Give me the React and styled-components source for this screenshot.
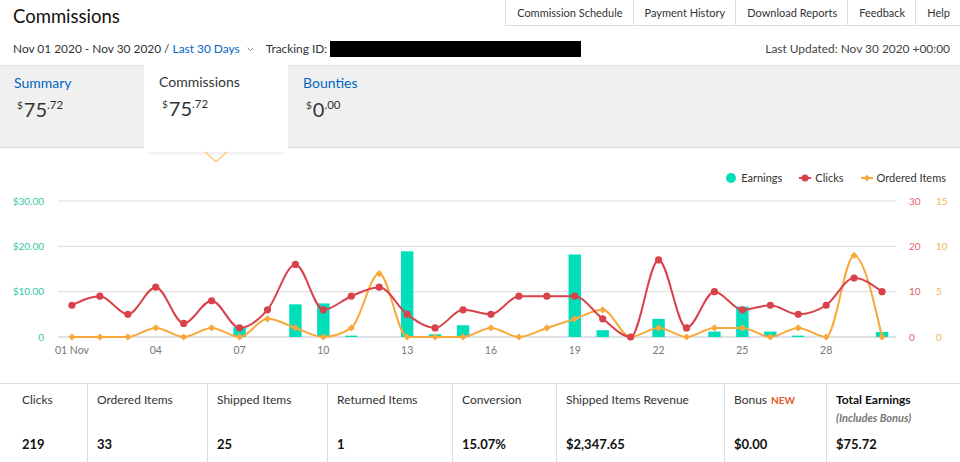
import React from "react";
import styled, { createGlobalStyle } from "styled-components";

const GlobalStyle = createGlobalStyle`
  html, body { margin: 0; padding: 0; background: #fff; }
  body { font-family: Lato, "Liberation Sans", sans-serif; color: #333; }
  #root { width: 960px; height: 462px; overflow: hidden; }
`;

const Page = styled.div`
  width: 960px;
  height: 462px;
  display: flex;
  flex-direction: column;
`;

const TopRow = styled.div`
  display: flex;
  justify-content: space-between;
  align-items: flex-start;
  height: 40px;
  padding-left: 13px;
`;

const Title = styled.h1`
  margin: 0;
  padding-top: 5px;
  font-size: 18.5px;
  line-height: 22px;
  font-weight: 400;
  color: #111;
`;

const Nav = styled.nav`
  display: flex;
  border-bottom: 1px solid #ddd;
`;

const NavItem = styled.div`
  padding: 0 10px 0 11px;
  line-height: 25px;
  font-size: 11px;
  color: #333;
  border-left: 1px solid #ddd;
  white-space: nowrap;
`;

const SubRow = styled.div`
  display: flex;
  justify-content: space-between;
  align-items: flex-start;
  height: 25px;
  padding: 0 10px 0 13px;
  font-size: 11.9px;
  line-height: 17px;
`;

const FilterGroup = styled.div`
  display: flex;
  align-items: center;
  white-space: nowrap;
`;

const Link = styled.span`
  color: #0066c0;
`;

const Chevron = styled.svg`
  margin: 2px 12px 0 7px;
`;

const Redacted = styled.div`
  width: 251px;
  height: 16px;
  margin-left: 3px;
  background: #000;
`;

const Muted = styled.span`
  color: #444;
`;

const TabBar = styled.div`
  display: flex;
  height: 81px;
  background: #f0f0f0;
  border-top: 1px solid #e4e4e4;
  border-bottom: 1px solid #dadada;
`;

const Tab = styled.div`
  position: relative;
  width: 144px;
  padding: 8px 0 0 ${(p) => (p.$first ? 14 : 15)}px;
  box-sizing: border-box;
  background: ${(p) => (p.$active ? "#fff" : "transparent")};
  margin-top: ${(p) => (p.$active ? "-1px" : "0")};
  height: ${(p) => (p.$active ? "87px" : "81px")};
  box-shadow: ${(p) => (p.$active ? "0 5px 4px -4px rgba(0,0,0,0.10)" : "none")};
  z-index: ${(p) => (p.$active ? 2 : 1)};
`;

const TabLabel = styled.div`
  font-size: 14px;
  line-height: 17px;
  color: ${(p) => (p.$active ? "#333" : "#0066c0")};
`;

const Price = styled.div`
  margin-top: 6px;
  padding-left: 3px;
  display: flex;
  align-items: flex-start;
  color: #333;
  line-height: 24px;
`;

const Cur = styled.span`
  font-size: 10px;
  line-height: 14px;
  margin-top: 1px;
  margin-right: 1px;
`;

const Whole = styled.span`
  font-size: 20px;
`;

const Cents = styled.span`
  font-size: 11.5px;
  line-height: 14px;
  margin-top: 1px;
`;

const Pointer = styled.svg`
  position: absolute;
  left: 60px;
  top: 86px;
`;

const ChartSection = styled.section`
  display: flex;
  flex-direction: column;
  height: 235px;
`;

const Legend = styled.div`
  display: flex;
  justify-content: flex-end;
  align-items: flex-start;
  gap: 17px;
  height: 45px;
  padding: 23px 14px 0 0;
  box-sizing: border-box;
  font-size: 11px;
  line-height: 14px;
  color: #333;
`;

const LegendItem = styled.div`
  display: flex;
  align-items: center;
  gap: ${(p) => p.$gap || 4}px;
  height: 14px;
`;

const StatsRow = styled.div`
  display: grid;
  grid-template-columns: 87px 120px 120px 125px 104px 168px 102px 134px;
  border-top: 1px solid #ddd;
  height: 80px;
`;

const StatCell = styled.div`
  display: flex;
  flex-direction: column;
  padding: 9px 0 11px ${(p) => (p.$first ? 22 : 9)}px;
  border-left: ${(p) => (p.$first ? "none" : "1px solid #ddd")};
`;

const StatLabel = styled.div`
  font-size: 12px;
  line-height: 14px;
  color: ${(p) => (p.$strong ? "#111" : "#333")};
  font-weight: ${(p) => (p.$strong ? 700 : 400)};
  white-space: nowrap;
`;

const NewBadge = styled.span`
  color: #e3571f;
  font-weight: 700;
  font-size: 10px;
  margin-left: 4px;
`;

const StatNote = styled.div`
  margin-top: 4px;
  font-size: 11px;
  font-style: italic;
  font-weight: 700;
  color: #777;
`;

const StatValue = styled.div`
  margin-top: auto;
  font-size: 13px;
  line-height: 14px;
  font-weight: 700;
  color: #111;
`;

const clicks = [7, 9, 5, 11, 3, 8, 2, 6, 16, 6, 9, 11, 5, 2, 6, 5, 9, 9, 9, 4, 0, 17, 2, 10, 6, 7, 5, 7, 13, 10];
const items = [0, 0, 0, 1, 0, 1, 0, 2, 1, 0, 1, 7, 0, 0, 0, 1, 0, 1, 2, 3, 0, 1, 0, 1, 1, 0, 1, 0, 9, 0];
const earnings = [0, 0, 0, 0, 0, 0, 2.2, 0, 7.2, 7.4, 0.3, 0, 18.9, 0.6, 2.6, 0, 0, 0, 18.2, 1.5, 0, 4.0, 0, 1.2, 6.7, 1.2, 0.3, 0, 0, 1.1];

const X0 = 58;
const X1 = 896;
const BAND = (X1 - X0) / 30;
const YB = 144;
const YT = 8;
const H = YB - YT;
const xAt = (i) => X0 + (i + 0.5) * BAND;
const yEarn = (v) => YB - (v / 30) * H;
const yClick = (v) => YB - (v / 30) * H;
const yItem = (v) => YB - (v / 15) * H;

function monotonePath(pts) {
  const n = pts.length;
  const xs = pts.map((p) => p[0]);
  const ys = pts.map((p) => p[1]);
  const t = new Array(n).fill(0);
  for (let i = 1; i < n - 1; i++) {
    const h0 = xs[i] - xs[i - 1];
    const h1 = xs[i + 1] - xs[i];
    const s0 = (ys[i] - ys[i - 1]) / h0;
    const s1 = (ys[i + 1] - ys[i]) / h1;
    const p = (s0 * h1 + s1 * h0) / (h0 + h1);
    t[i] = (Math.sign(s0) + Math.sign(s1)) * Math.min(Math.abs(s0), Math.abs(s1), 0.5 * Math.abs(p)) || 0;
  }
  t[0] = (3 * (ys[1] - ys[0]) / (xs[1] - xs[0]) - t[1]) / 2;
  t[n - 1] = (3 * (ys[n - 1] - ys[n - 2]) / (xs[n - 1] - xs[n - 2]) - t[n - 2]) / 2;
  let d = `M${xs[0]},${ys[0]}`;
  for (let i = 0; i < n - 1; i++) {
    const dx = (xs[i + 1] - xs[i]) / 3;
    d += ` C${xs[i] + dx},${ys[i] + dx * t[i]} ${xs[i + 1] - dx},${ys[i + 1] - dx * t[i + 1]} ${xs[i + 1]},${ys[i + 1]}`;
  }
  return d;
}

const TEAL = "#00dfb9";
const RED = "#d9414b";
const ORANGE = "#f9a83c";

function Chart() {
  const clickPts = clicks.map((v, i) => [xAt(i), yClick(v)]);
  const itemPts = items.map((v, i) => [xAt(i), yItem(v)]);
  const grid = [0, 10, 20, 30];
  const xTicks = [0, 3, 6, 9, 12, 15, 18, 21, 24, 27];
  return (
    <svg width="960" height="190" viewBox="0 0 960 190" style={{ display: "block" }}>
      {grid.map((g) => (
        <line
          key={g}
          x1={X0}
          x2={X1}
          y1={yEarn(g)}
          y2={yEarn(g)}
          stroke={g === 0 ? "#bcc6cf" : "#dcdcdc"}
          strokeWidth="1"
        />
      ))}
      <g fontFamily="Lato, 'Liberation Sans', sans-serif" fontSize="10">
        {grid.map((g) => (
          <text key={"l" + g} x="44" y={yEarn(g) + 3.5} textAnchor="end" fill="#33c9a6">
            {g === 0 ? "0" : `$${g}.00`}
          </text>
        ))}
        {grid.map((g) => (
          <text key={"r" + g} x="909" y={yEarn(g) + 3.5} fill="#e0636b">
            {g}
          </text>
        ))}
        {grid.map((g) => (
          <text key={"o" + g} x="936" y={yEarn(g) + 3.5} fill="#f5b458">
            {g / 2}
          </text>
        ))}
        {xTicks.map((i) => (
          <text key={"x" + i} x={xAt(i)} y="161" textAnchor="middle" fill="#777" fontSize="10.5">
            {i === 0 ? "01 Nov" : String(i + 1).padStart(2, "0")}
          </text>
        ))}
      </g>
      {earnings.map((v, i) =>
        v > 0 ? (
          <rect key={"b" + i} x={xAt(i) - 6.2} y={yEarn(v)} width="12.4" height={YB - yEarn(v)} fill={TEAL} />
        ) : null
      )}
      <path d={monotonePath(itemPts)} fill="none" stroke={ORANGE} strokeWidth="2" />
      {itemPts.map(([x, y], i) => (
        <polygon key={"d" + i} points={`${x},${y - 3.6} ${x + 3.6},${y} ${x},${y + 3.6} ${x - 3.6},${y}`} fill={ORANGE} />
      ))}
      <path d={monotonePath(clickPts)} fill="none" stroke={RED} strokeWidth="2" />
      {clickPts.map(([x, y], i) => (
        <circle key={"c" + i} cx={x} cy={y} r="3.6" fill={RED} />
      ))}
    </svg>
  );
}

function PriceView({ whole, cents }) {
  return (
    <Price>
      <Cur>$</Cur>
      <Whole>{whole}</Whole>
      <Cents>.{cents}</Cents>
    </Price>
  );
}

const stats = [
  { label: "Clicks", value: "219" },
  { label: "Ordered Items", value: "33" },
  { label: "Shipped Items", value: "25" },
  { label: "Returned Items", value: "1" },
  { label: "Conversion", value: "15.07%" },
  { label: "Shipped Items Revenue", value: "$2,347.65" },
  { label: "Bonus", value: "$0.00", badge: "NEW" },
  { label: "Total Earnings", value: "$75.72", strong: true, note: "(Includes Bonus)" },
];

export default function App() {
  return (
    <Page>
      <GlobalStyle />
      <header>
        <TopRow>
          <Title>Commissions</Title>
          <Nav>
            <NavItem>Commission Schedule</NavItem>
            <NavItem>Payment History</NavItem>
            <NavItem>Download Reports</NavItem>
            <NavItem>Feedback</NavItem>
            <NavItem>Help</NavItem>
          </Nav>
        </TopRow>
        <SubRow>
          <FilterGroup>
            <span>Nov 01 2020 - Nov 30 2020 /&nbsp;</span>
            <Link>Last 30 Days</Link>
            <Chevron width="7" height="5" viewBox="0 0 7 5">
              <path d="M0.7 0.8 L3.5 3.6 L6.3 0.8" fill="none" stroke="#888" strokeWidth="1" />
            </Chevron>
            <span>Tracking ID:</span>
            <Redacted />
          </FilterGroup>
          <Muted>Last Updated: Nov 30 2020 +00:00</Muted>
        </SubRow>
      </header>
      <TabBar>
        <Tab $first>
          <TabLabel>Summary</TabLabel>
          <PriceView whole="75" cents="72" />
        </Tab>
        <Tab $active>
          <TabLabel $active>Commissions</TabLabel>
          <PriceView whole="75" cents="72" />
          <Pointer width="24" height="12" viewBox="0 0 24 12">
            <path d="M1 1 L12 10.5 L23 1" fill="none" stroke="#fbc77c" strokeWidth="1.4" />
          </Pointer>
        </Tab>
        <Tab>
          <TabLabel>Bounties</TabLabel>
          <PriceView whole="0" cents="00" />
        </Tab>
      </TabBar>
      <ChartSection>
        <Legend>
          <LegendItem $gap={5}>
            <svg width="10" height="10" viewBox="0 0 10 10">
              <circle cx="5" cy="5" r="5" fill={TEAL} />
            </svg>
            <span>Earnings</span>
          </LegendItem>
          <LegendItem>
            <svg width="12" height="8" viewBox="0 0 12 8">
              <line x1="0" x2="12" y1="4" y2="4" stroke={RED} strokeWidth="2" />
              <circle cx="6" cy="4" r="3.5" fill={RED} />
            </svg>
            <span>Clicks</span>
          </LegendItem>
          <LegendItem>
            <svg width="12" height="8" viewBox="0 0 12 8">
              <line x1="0" x2="12" y1="4" y2="4" stroke={ORANGE} strokeWidth="2" />
              <polygon points="6,0.8 9.2,4 6,7.2 2.8,4" fill={ORANGE} />
            </svg>
            <span>Ordered Items</span>
          </LegendItem>
        </Legend>
        <Chart />
      </ChartSection>
      <StatsRow>
        {stats.map((s, i) => (
          <StatCell key={s.label} $first={i === 0}>
            <StatLabel $strong={s.strong}>
              {s.label}
              {s.badge && <NewBadge>{s.badge}</NewBadge>}
            </StatLabel>
            {s.note && <StatNote>{s.note}</StatNote>}
            <StatValue>{s.value}</StatValue>
          </StatCell>
        ))}
      </StatsRow>
    </Page>
  );
}
